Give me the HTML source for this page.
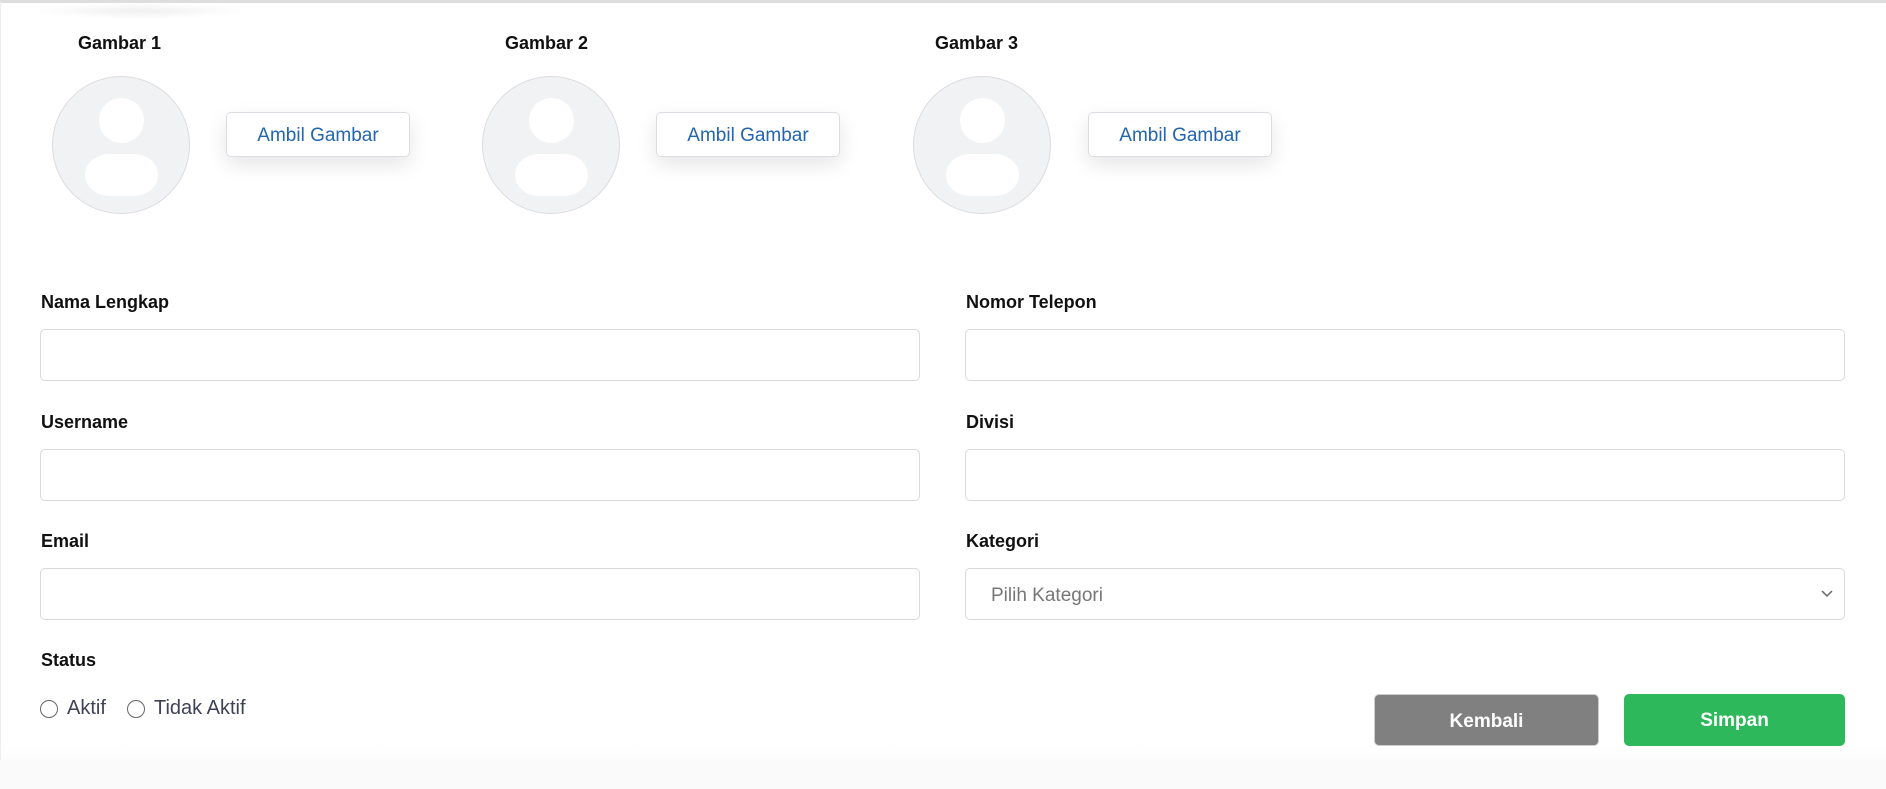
<!DOCTYPE html>
<html><head><meta charset="utf-8"><style>
*{box-sizing:border-box;margin:0;padding:0}
html,body{width:1886px;height:789px;overflow:hidden;background:#fafafa;font-family:"Liberation Sans",sans-serif}
.card{position:absolute;left:0;top:0;width:1886px;height:760px;background:linear-gradient(#fff 0,#fff 740px,#fcfcfc 760px);border-top:3px solid #ddd;border-left:1px solid #eee}
.topsh{position:absolute;left:30px;top:3px;width:220px;height:16px;background:radial-gradient(ellipse at center,rgba(0,0,0,.06),rgba(0,0,0,0) 70%)}
.abs{position:absolute}
.glab{font-size:18px;font-weight:bold;color:#111}
.av{position:absolute;width:138px;height:138px;border-radius:50%;background:#f1f2f4;border:1px solid #dcdce0}
.av .h{position:absolute;left:46px;top:21px;width:45px;height:45px;border-radius:50%;background:#fff}
.av .b{position:absolute;left:32px;top:77px;width:73px;height:42px;border-radius:24px/21px;background:#fff}
.btn{position:absolute;width:184px;height:45px;border:1px solid #dcdde2;border-radius:5px;background:#fff;color:#2266b0;font-size:19px;text-align:center;line-height:46px;box-shadow:0 8px 20px rgba(0,0,0,.10)}
.lab{position:absolute;font-size:18px;font-weight:bold;color:#111}
.inp{position:absolute;height:52px;border:1px solid #d9d9d9;border-radius:5px;background:#fff}
.l{left:40px;width:880px}.r{left:965px;width:880px}
.rad{position:absolute;top:700px;width:18px;height:18px;border:1.5px solid #666;border-radius:50%}
.rt{position:absolute;top:697px;font-size:20px;color:#3f4257}
.act{position:absolute;top:694px;height:52px;border-radius:5px;color:#fff;font-weight:bold;font-size:19px;text-align:center;line-height:54px}
</style></head><body>
<div class="card"></div>
<div class="topsh"></div>

<div class="abs glab" style="left:78px;top:33px">Gambar 1</div>
<div class="av" style="left:52px;top:76px"><div class="h"></div><div class="b"></div></div>
<div class="btn" style="left:226px;top:112px">Ambil Gambar</div>

<div class="abs glab" style="left:505px;top:33px">Gambar 2</div>
<div class="av" style="left:482px;top:76px"><div class="h"></div><div class="b"></div></div>
<div class="btn" style="left:656px;top:112px">Ambil Gambar</div>

<div class="abs glab" style="left:935px;top:33px">Gambar 3</div>
<div class="av" style="left:913px;top:76px"><div class="h"></div><div class="b"></div></div>
<div class="btn" style="left:1088px;top:112px">Ambil Gambar</div>

<div class="lab" style="left:41px;top:292px">Nama Lengkap</div>
<div class="inp l" style="top:329px"></div>
<div class="lab" style="left:966px;top:292px">Nomor Telepon</div>
<div class="inp r" style="top:329px"></div>

<div class="lab" style="left:41px;top:412px">Username</div>
<div class="inp l" style="top:449px"></div>
<div class="lab" style="left:966px;top:412px">Divisi</div>
<div class="inp r" style="top:449px"></div>

<div class="lab" style="left:41px;top:531px">Email</div>
<div class="inp l" style="top:568px"></div>
<div class="lab" style="left:966px;top:531px">Kategori</div>
<div class="inp r" style="top:568px"><span style="position:absolute;left:25px;top:16px;font-size:19px;color:#777">Pilih Kategori</span>
<svg style="position:absolute;right:10px;top:20px" width="14" height="10" viewBox="0 0 14 10"><path d="M2 2 L7 7 L12 2" fill="none" stroke="#666" stroke-width="1.5"/></svg></div>

<div class="lab" style="left:41px;top:650px">Status</div>
<div class="rad" style="left:40px"></div><div class="rt" style="left:67px">Aktif</div>
<div class="rad" style="left:127px"></div><div class="rt" style="left:154px">Tidak Aktif</div>

<div class="act" style="left:1374px;width:225px;background:#808080;border:1px solid #ccc">Kembali</div>
<div class="act" style="left:1624px;width:221px;background:#2db85c">Simpan</div>
</body></html>
